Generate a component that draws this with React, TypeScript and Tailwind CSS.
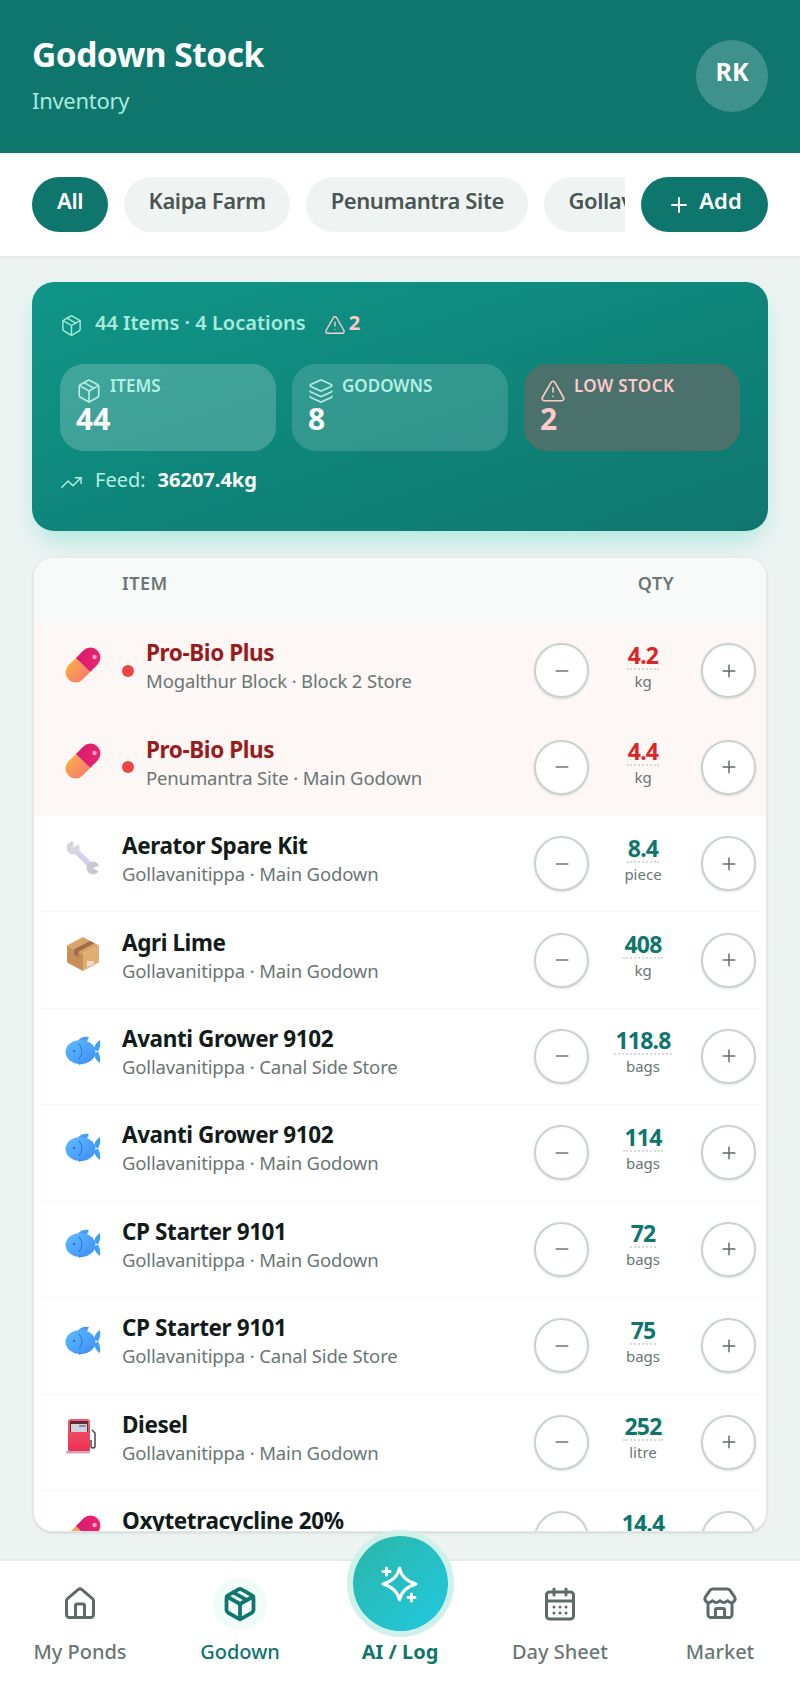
import { AlertTriangle, CalendarDays, House, Layers, Minus, Package, Plus, Store, TrendingUp } from 'lucide-react';

type Kind = 'pill' | 'wrench' | 'box' | 'fish' | 'fuel';

const rows: { kind: Kind; name: string; place: string; qty: string; unit: string; low?: boolean }[] = [
  { kind: 'pill', name: 'Pro-Bio Plus', place: 'Mogalthur Block · Block 2 Store', qty: '4.2', unit: 'kg', low: true },
  { kind: 'pill', name: 'Pro-Bio Plus', place: 'Penumantra Site · Main Godown', qty: '4.4', unit: 'kg', low: true },
  { kind: 'wrench', name: 'Aerator Spare Kit', place: 'Gollavanitippa · Main Godown', qty: '8.4', unit: 'piece' },
  { kind: 'box', name: 'Agri Lime', place: 'Gollavanitippa · Main Godown', qty: '408', unit: 'kg' },
  { kind: 'fish', name: 'Avanti Grower 9102', place: 'Gollavanitippa · Canal Side Store', qty: '118.8', unit: 'bags' },
  { kind: 'fish', name: 'Avanti Grower 9102', place: 'Gollavanitippa · Main Godown', qty: '114', unit: 'bags' },
  { kind: 'fish', name: 'CP Starter 9101', place: 'Gollavanitippa · Main Godown', qty: '72', unit: 'bags' },
  { kind: 'fish', name: 'CP Starter 9101', place: 'Gollavanitippa · Canal Side Store', qty: '75', unit: 'bags' },
  { kind: 'fuel', name: 'Diesel', place: 'Gollavanitippa · Main Godown', qty: '252', unit: 'litre' },
  { kind: 'pill', name: 'Oxytetracycline 20%', place: 'Gollavanitippa · Main Godown', qty: '14.4', unit: 'kg' },
];

function ItemIcon({ kind }: { kind: Kind }) {
  if (kind === 'pill') {
    return (
      <svg viewBox="0 0 36 36" className="w-9 h-9">
        <defs>
          <linearGradient id="pillA" x1="0" y1="0" x2="0" y2="1">
            <stop offset="0" stopColor="#f9a94a" />
            <stop offset="1" stopColor="#f8806a" />
          </linearGradient>
          <linearGradient id="pillB" x1="0" y1="0" x2="1" y2="1">
            <stop offset="0" stopColor="#d81b72" />
            <stop offset="1" stopColor="#f0246e" />
          </linearGradient>
        </defs>
        <g transform="rotate(-45 18 18)">
          <path d="M18 8H7.500a10 10 0 0 0 0 20H18z" fill="url(#pillA)" />
          <path d="M18 8h10.500a10 10 0 0 1 0 20H18z" fill="url(#pillB)" />
        </g>
        <circle cx="29.500" cy="10" r="2.200" fill="#f9a8c9" />
      </svg>
    );
  }
  if (kind === 'wrench') {
    return (
      <svg viewBox="0 0 36 36" className="w-9 h-9">
        <path d="M9 9 L27 27" stroke="#d6d0f0" strokeWidth="5.500" strokeLinecap="round" />
        <circle cx="8" cy="8" r="6.500" fill="#d5d5dc" />
        <path d="M8 8 L9 0 L16 2 Z" fill="#fff" />
        <circle cx="28" cy="28" r="6.500" fill="#c8c8d0" />
        <path d="M28 28 L37 25 L36 33 Z" fill="#fff" />
      </svg>
    );
  }
  if (kind === 'box') {
    return (
      <svg viewBox="0 0 36 36" className="w-9 h-9">
        <path d="M18 1 L34 9.500 L18 18 L2 9.500 Z" fill="#d9a468" />
        <path d="M2 9.500 L18 18 L18 35 L3 27 Q2 26.500 2 25 Z" fill="#c98f58" />
        <path d="M34 9.500 L18 18 L18 35 L33 27 Q34 26.500 34 25 Z" fill="#dfae74" />
        <path d="M9 13.200 L25 5 L29.500 7.200 L13.500 15.700 L13.500 21 L9 18.500 Z" fill="#a26d48" />
        <path d="M22 25 L29 25 L29 28 L22 31.500 Z" fill="#f1d9d2" />
      </svg>
    );
  }
  if (kind === 'fish') {
    return (
      <svg viewBox="0 0 36 36" className="w-9 h-9">
        <defs>
          <linearGradient id="fishA" x1="0" y1="0" x2="1" y2="1">
            <stop offset="0" stopColor="#5fbcff" />
            <stop offset="1" stopColor="#3f8cf8" />
          </linearGradient>
        </defs>
        <g transform="translate(0 2)">
          <path d="M13 7 Q16 2 24 3 Q22 6 22 9 Z" fill="#45a0f5" />
          <path d="M35 6 Q30 9 29 15 L33 17.500 Q36 12 35 6 Z" fill="#3ea0f7" />
          <path d="M35 29 Q30 26 29 20 L33 17.500 Q36 23 35 29 Z" fill="#3ea0f7" />
          <ellipse cx="15.500" cy="18" rx="15" ry="12" fill="url(#fishA)" />
          <path d="M14 31 L19 29 L14 28 Z" fill="#3d92f3" />
          <circle cx="9" cy="17" r="1" fill="#1f5fa8" />
          <path d="M14 10 Q20 17 14 25" fill="none" stroke="#1f6cc4" strokeWidth="0.800" />
        </g>
      </svg>
    );
  }
  return (
    <svg viewBox="0 0 36 36" className="w-9 h-9">
      <defs>
        <linearGradient id="fuelA" x1="0" y1="0" x2="0" y2="1">
          <stop offset="0" stopColor="#f25e6a" />
          <stop offset="1" stopColor="#ec2f53" />
        </linearGradient>
      </defs>
      <path d="M27 12 L30 15 L30 28 Q30 30 28 30 Q26 30 26 28 L26 22" fill="none" stroke="#3d3c44" strokeWidth="1.400" />
      <rect x="3" y="1" width="22" height="33" rx="3" fill="url(#fuelA)" />
      <rect x="5" y="3" width="18" height="11" rx="1" fill="#5e2a3c" />
      <rect x="6" y="6" width="16" height="8" fill="#d3d0de" />
      <rect x="14" y="7" width="7" height="2" fill="#8d8b9c" />
      <rect x="1" y="33" width="24" height="2.500" rx="1" fill="#c9a4c9" />
    </svg>
  );
}

function Row({ kind, name, place, qty, unit, low }: (typeof rows)[number]) {
  return (
    <div className={`flex items-center h-[96.45px] shrink-0 border-b border-[#f7f9f8] ${low ? 'bg-[#fdf7f6]' : 'bg-white'}`}>
      <div className="w-[88px] shrink-0 pl-[31px] -translate-y-[6px]">
        <ItemIcon kind={kind} />
      </div>
      {low && <span className="w-3 h-3 rounded-full bg-[#ef4444] mr-[12px] shrink-0" />}
      <div className="flex-1 min-w-0 -translate-y-[5px]">
        <div className={`text-[22.5px] leading-[30px] font-bold tracking-[-0.4px] ${low ? 'text-[#991b1b]' : 'text-[#111c1a]'}`}>{name}</div>
        <div className="text-[18.5px] leading-[25px] text-[#6b7674] tracking-[-0.15px]">{place}</div>
      </div>
      <button className="w-[55px] h-[55px] rounded-full bg-white border-2 border-[#c9d3d0] shadow-sm flex items-center justify-center shrink-0 text-[#6b7874]">
        <Minus size={20} strokeWidth={1.750} />
      </button>
      <div className="w-[112px] shrink-0 flex flex-col items-center -translate-x-[2px] -translate-y-[4px]">
        <span className={`text-[23px] leading-[26px] font-bold tracking-[-0.8px] border-b-2 border-dotted border-[#d5dbd9] px-px ${low ? 'text-[#dc2626]' : 'text-[#0f766e]'}`}>{qty}</span>
        <span className="text-[15px] leading-[22px] text-[#6b7674]">{unit}</span>
      </div>
      <button className="w-[55px] h-[55px] rounded-full bg-white border-2 border-[#c9d3d0] shadow-sm flex items-center justify-center shrink-0 text-[#5f6b68] mr-[10px]">
        <Plus size={20} strokeWidth={1.750} />
      </button>
    </div>
  );
}

function NavItem({ label, icon, active }: { label: string; icon: React.ReactNode; active?: boolean }) {
  return (
    <div className="w-40 flex flex-col items-center">
      <div className={`w-[54px] h-[52px] flex items-center justify-center rounded-full ${active ? 'bg-[#f1fbf8] text-[#0f766e]' : 'text-[#5f6b68]'}`}>{icon}</div>
      <span className={`mt-[8px] text-[20px] leading-7 font-medium ${active ? 'text-[#0f766e]' : 'text-[#6b7674]'}`}>{label}</span>
    </div>
  );
}

export default function App() {
  return (
    <div className="relative w-[800px] h-[1707px] flex flex-col overflow-hidden bg-[#ecf3f1] font-['Noto_Sans',sans-serif]">
      {/* Header */}
      <div className="h-[153px] shrink-0 bg-[#0f766e] flex items-center justify-between pl-8 pr-8">
        <div className="-translate-y-[3px]">
          <h1 className="text-[33.5px] leading-[40px] font-bold text-white tracking-[-0.5px]">Godown Stock</h1>
          <p className="mt-3 text-[22px] leading-7 text-[#a7ebdf] tracking-[-0.3px]">Inventory</p>
        </div>
        <div className="w-[72px] h-[72px] rounded-full bg-white/20 flex items-center justify-center -translate-y-[1px]">
          <span className="text-white text-[25px] font-bold -translate-y-1">RK</span>
        </div>
      </div>

      {/* Location filter */}
      <div className="h-[105px] shrink-0 bg-white border-b-2 border-[#e5eae8] flex items-center gap-4 pl-8 pr-8">
        <div className="flex-1 min-w-0 flex gap-4 overflow-hidden text-[22px] font-semibold tracking-[-0.4px]">
          <span className="h-[55px] pb-2 px-[25px] rounded-full bg-[#0f766e] text-white flex items-center shrink-0">All</span>
          <span className="h-[55px] pb-2 px-[24.5px] rounded-full bg-[#eff4f3] text-[#4b5553] flex items-center shrink-0">Kaipa Farm</span>
          <span className="h-[55px] pb-2 px-[24.5px] rounded-full bg-[#eff4f3] text-[#4b5553] flex items-center shrink-0">Penumantra Site</span>
          <span className="h-[55px] pb-2 px-6 rounded-full bg-[#eff4f3] text-[#4b5553] flex items-center shrink-0">Gollavanitippa</span>
        </div>
        <button className="h-[55px] w-[127px] shrink-0 rounded-full bg-[#0f766e] text-white text-[22px] font-semibold flex items-center justify-center gap-2">
          <Plus size={24} strokeWidth={2} />
          <span className="-translate-y-1">Add</span>
        </button>
      </div>

      {/* Content */}
      <div className="flex-1 min-h-0 px-8 pt-6 flex flex-col">
        <div className="h-[249px] shrink-0 rounded-[22px] bg-gradient-to-br from-[#0f9688] to-[#0f766e] shadow-[0_14px_24px_-6px_rgba(45,212,191,0.35)] px-7 pt-[27px]">
          <div className="flex items-center h-7 text-[20px] font-semibold text-[#a7ebdf]">
            <Package size={23} strokeWidth={1.500} className="mr-3 mt-1" />
            <span>44 Items · 4 Locations</span>
            <AlertTriangle size={22} strokeWidth={1.500} className="ml-[18px] mt-1 text-[#fecaca]" />
            <span className="ml-[3px] font-bold text-[#fecaca]">2</span>
          </div>
          <div className="mt-[27px] grid grid-cols-3 gap-4">
            <div className="h-[87px] rounded-[24px] bg-white/20 px-4 pt-3">
              <div className="flex items-start gap-2 text-[#b5efe5]">
                <Package size={26} strokeWidth={1.500} className="mt-0.5" />
                <span className="text-[17px] leading-5 font-semibold">ITEMS</span>
              </div>
              <div className="-mt-[3px] text-[30px] leading-[36px] font-bold text-white">44</div>
            </div>
            <div className="h-[87px] rounded-[24px] bg-white/15 px-4 pt-3">
              <div className="flex items-start gap-2 text-[#b5efe5]">
                <Layers size={26} strokeWidth={1.500} className="mt-0.5" />
                <span className="text-[17px] leading-5 font-semibold">GODOWNS</span>
              </div>
              <div className="-mt-[3px] text-[30px] leading-[36px] font-bold text-white">8</div>
            </div>
            <div className="h-[87px] rounded-[24px] bg-[#4a716b] px-4 pt-3">
              <div className="flex items-start gap-2 text-[#fecaca]">
                <AlertTriangle size={26} strokeWidth={1.500} className="mt-0.5" />
                <span className="text-[17px] leading-5 font-semibold tracking-[0.4px]">LOW STOCK</span>
              </div>
              <div className="-mt-[3px] text-[30px] leading-[36px] font-bold text-[#fecaca]">2</div>
            </div>
          </div>
          <div className="mt-[14px] flex items-center text-[20px] text-[#b5efe5]">
            <TrendingUp size={23} strokeWidth={1.500} className="mr-3 mt-1" />
            <span>Feed:</span>
            <span className="ml-[12px] font-bold text-white">36207.4kg</span>
          </div>
        </div>

        {/* Stock table */}
        <div className="mt-[26px] mx-px h-[975px] shrink-0 rounded-[20px] border border-[#e5eae8] bg-white shadow-sm overflow-hidden flex flex-col">
          <div className="h-[65px] shrink-0 bg-[#f8faf9] flex items-center pl-[88px] pr-[92px] justify-between text-[18px] font-semibold text-[#6b7674] tracking-[0.5px]">
            <span className="-translate-y-[7px]">ITEM</span>
            <span className="-translate-y-[7px]">QTY</span>
          </div>
          {rows.map((r, i) => (
            <Row key={i} {...r} />
          ))}
        </div>
      </div>

      {/* Bottom nav */}
      <div className="h-[148px] shrink-0 bg-white border-t-2 border-[#e5eae8] flex items-start pt-[17px]">
        <NavItem label="My Ponds" icon={<House size={36} strokeWidth={2} />} />
        <NavItem label="Godown" active icon={<Package size={36} strokeWidth={2.500} />} />
        <div className="w-40 flex flex-col items-center pt-[60px]">
          <span className="text-[20px] leading-7 font-bold text-[#0f766e]">AI / Log</span>
        </div>
        <NavItem label="Day Sheet" icon={<CalendarDays size={36} strokeWidth={2} />} />
        <NavItem label="Market" icon={<Store size={36} strokeWidth={2} />} />
      </div>

      {/* AI button over the nav */}
      <div className="absolute left-[352.5px] top-[1536px] w-[95px] h-[95px] rounded-full bg-gradient-to-br from-[#2bb5a8] to-[#20c9e0] ring-[6px] ring-[#cff1ea] flex items-center justify-center">
        <svg viewBox="0 0 40 40" className="w-10 h-10" fill="none" stroke="#fff" strokeWidth="3" strokeLinecap="round" strokeLinejoin="round">
          <path d="M19.500 4 C21 12 26 17 36 20 C26 23 21 28 19.500 36 C18 28 13 23 3 20 C13 17 18 12 19.500 4 Z" />
          <path d="M6.500 4 V11 M3 7.500 H10" />
          <path d="M31.500 30 V37 M28 33.500 H35" />
        </svg>
      </div>
    </div>
  );
}
